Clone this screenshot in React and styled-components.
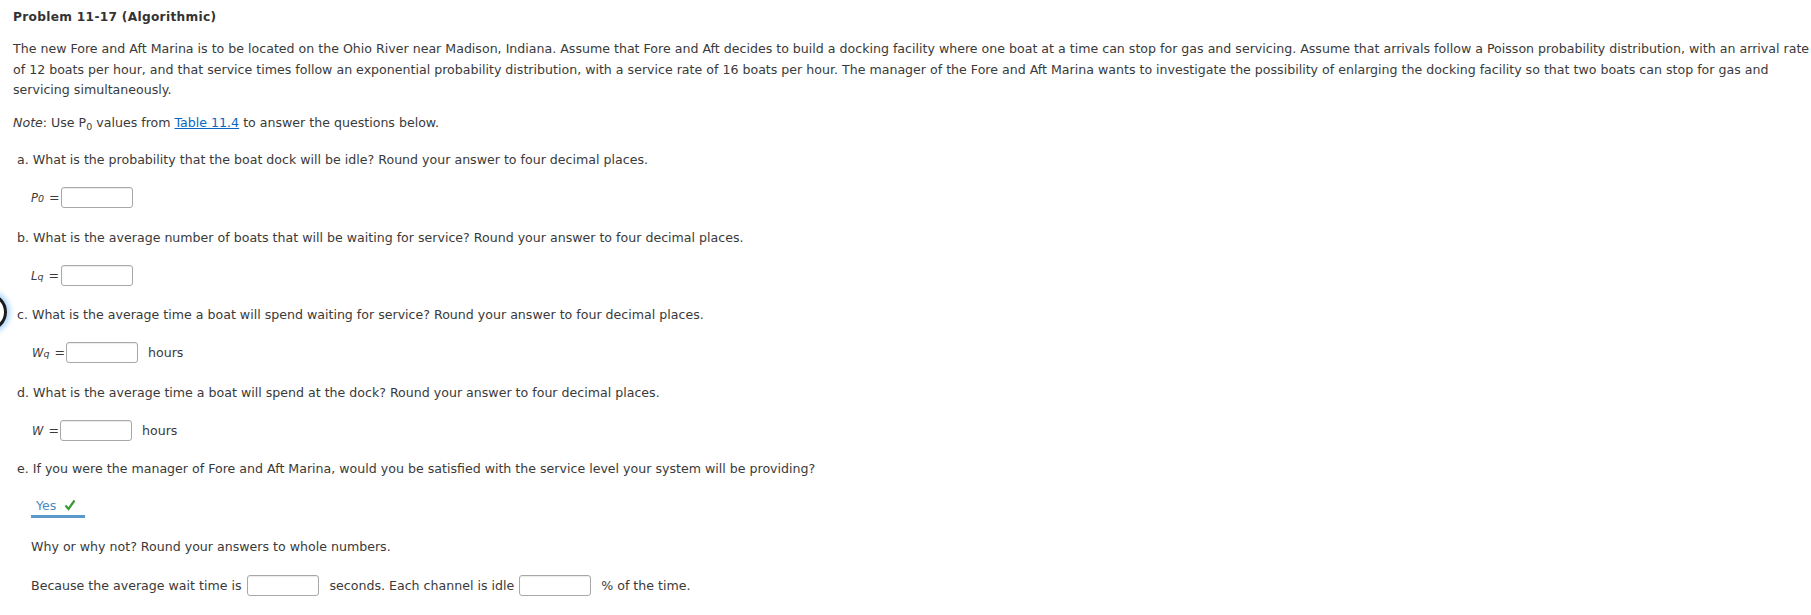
import React from "react";
import styled, { createGlobalStyle } from "styled-components";

const GlobalStyle = createGlobalStyle`
  html, body {
    margin: 0;
    padding: 0;
    background: #fff;
  }
  body {
    font-family: "DejaVu Sans", Verdana, sans-serif;
    font-size: 12.6px;
    color: #3a3a3a;
  }
`;

const Page = styled.div`
  position: relative;
  padding: 7px 0 0 13px;
  overflow: hidden;
  height: 608px;
`;

const Title = styled.h1`
  margin: 0;
  font-size: 12.2px;
  font-weight: bold;
  line-height: 20px;
  letter-spacing: 0.3px;
  color: #333;
`;

const Paragraph = styled.p`
  margin: ${props => props.$top || 0}px 0 0;
  line-height: 20.5px;
`;

const Note = styled.p`
  margin: 12px 0 0;
  line-height: 20px;
`;

const Link = styled.a`
  color: #0a66c2;
  text-decoration: underline;
`;

const Question = styled.p`
  margin: ${props => props.$top}px 0 0 4px;
  line-height: 20px;
`;

const AnswerRow = styled.div`
  display: flex;
  align-items: center;
  height: 22px;
  margin: ${props => props.$top}px 0 0 ${props => props.$indent || 18}px;
`;

const Label = styled.span`
  display: inline-flex;
  align-items: baseline;
  width: ${props => props.$width}px;
  font-size: 11.5px;
  white-space: nowrap;
`;

const Var = styled.i`
  font-style: italic;
`;

const Sub = styled.sub`
  font-size: 9.5px;
  line-height: 0;
  vertical-align: -3px;
`;

const Eq = styled.span`
  margin-left: 5px;
  font-size: 12.6px;
`;

const Input = styled.input`
  box-sizing: border-box;
  width: 72px;
  height: 21px;
  margin: 0;
  border: 1px solid #a8a8a8;
  border-radius: 3px;
  box-shadow: inset 0 1px 1px rgba(0, 0, 0, 0.08);
  background: #fff;
  font: inherit;
  padding: 0 4px;
`;

const Unit = styled.span`
  margin-left: ${props => props.$gap || 10}px;
  margin-right: ${props => props.$after || 0}px;
  white-space: nowrap;
`;

const Text = styled.span`
  margin-right: 5px;
  white-space: nowrap;
`;

const Select = styled.div`
  display: inline-flex;
  align-items: center;
  gap: 8px;
  height: 19px;
  padding: 0 9px 0 5px;
  border-bottom: 3px solid #5b98cc;
  color: #4a8bc4;
  line-height: 19px;
`;

const Plain = styled.p`
  margin: ${props => props.$top}px 0 0 18px;
  line-height: 20px;
`;

const Focus = styled.div`
  position: absolute;
  left: -31px;
  top: 293px;
  width: 32px;
  height: 32px;
  border-radius: 50%;
  border: 3px solid #1b1b1b;
  box-shadow: 0 0 5px 3px rgba(90, 175, 255, 0.5);
`;

const Check = () => (
  <svg width="12" height="12" viewBox="0 0 12 12">
    <path d="M1.5 6.5 L4.5 10 L10.5 1.5" fill="none" stroke="#3a9a3a" strokeWidth="2.2" />
  </svg>
);

const App = () => (
  <>
    <GlobalStyle />
    <Page>
      <Focus />
      <Title>Problem 11-17 (Algorithmic)</Title>
      <Paragraph $top={12}>
        The new Fore and Aft Marina is to be located on the Ohio River near Madison, Indiana. Assume that Fore and Aft
        decides to build a docking facility where one boat at a time can stop for gas and servicing. Assume that arrivals
        follow a Poisson probability distribution, with an arrival rate of 12 boats per hour, and that service times follow
        an exponential probability distribution, with a service rate of 16 boats per hour. The manager of the Fore and Aft
        Marina wants to investigate the possibility of enlarging the docking facility so that two boats can stop for gas and
        servicing simultaneously.
      </Paragraph>
      <Note>
        <i>Note</i>: Use P<Sub>0</Sub> values from <Link href="#">Table 11.4</Link> to answer the questions below.
      </Note>

      <Question $top={17}>a. What is the probability that the boat dock will be idle? Round your answer to four decimal places.</Question>
      <AnswerRow $top={16.5}>
        <Label $width={30}>
          <Var>P</Var><Sub><Var>0</Var></Sub><Eq>=</Eq>
        </Label>
        <Input />
      </AnswerRow>

      <Question $top={19.5}>b. What is the average number of boats that will be waiting for service? Round your answer to four decimal places.</Question>
      <AnswerRow $top={16.5}>
        <Label $width={30}>
          <Var>L</Var><Sub><Var>q</Var></Sub><Eq>=</Eq>
        </Label>
        <Input />
      </AnswerRow>

      <Question $top={18.5}>c. What is the average time a boat will spend waiting for service? Round your answer to four decimal places.</Question>
      <AnswerRow $top={17} $indent={19}>
        <Label $width={34}>
          <Var>W</Var><Sub><Var>q</Var></Sub><Eq>=</Eq>
        </Label>
        <Input />
        <Unit>hours</Unit>
      </AnswerRow>

      <Question $top={19}>d. What is the average time a boat will spend at the dock? Round your answer to four decimal places.</Question>
      <AnswerRow $top={16.5} $indent={19}>
        <Label $width={28}>
          <Var>W</Var><Eq>=</Eq>
        </Label>
        <Input />
        <Unit>hours</Unit>
      </AnswerRow>

      <Question $top={17.5}>e. If you were the manager of Fore and Aft Marina, would you be satisfied with the service level your system will be providing?</Question>
      <AnswerRow $top={17}>
        <Select>
          Yes
          <Check />
        </Select>
      </AnswerRow>

      <Plain $top={19.5}>Why or why not? Round your answers to whole numbers.</Plain>
      <AnswerRow $top={17.5}>
        <Text>Because the average wait time is</Text>
        <Input />
        <Unit $gap={11} $after={5}>seconds. Each channel is idle</Unit>
        <Input />
        <Unit $gap={10}>% of the time.</Unit>
      </AnswerRow>
    </Page>
  </>
);

export default App;
